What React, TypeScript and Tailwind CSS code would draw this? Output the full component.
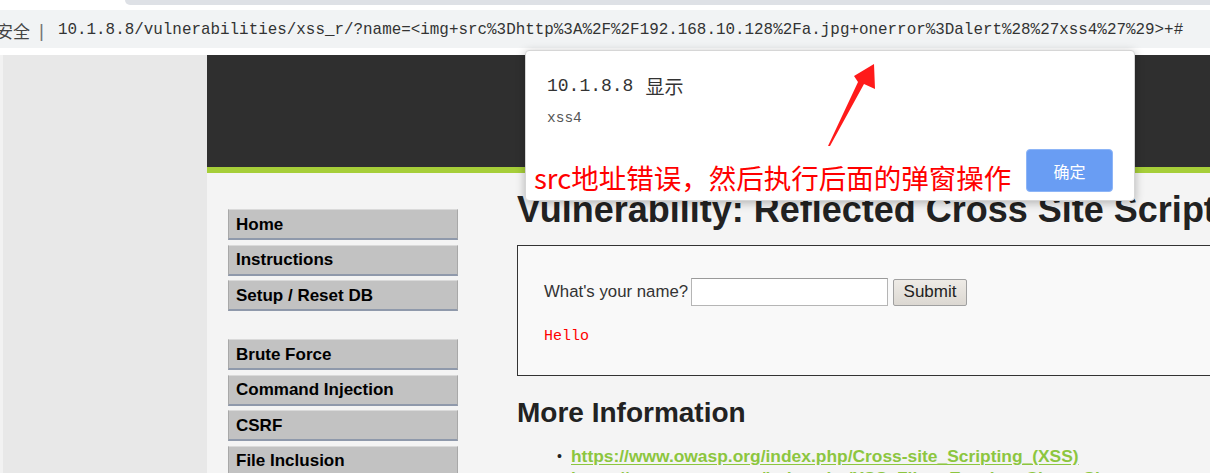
import React from "react";

const menuTop = ["Home", "Instructions", "Setup / Reset DB"];
const menuBottom = ["Brute Force", "Command Injection", "CSRF", "File Inclusion", "File Upload"];

function MenuItem({ label }: { label: string }) {
  return (
    <div className="h-[31px] w-[230px] shrink-0 bg-[#c2c2c2] border-t border-t-[#dadada] border-l border-l-[#a8a8a8] border-r border-r-[#a8a8a8] border-b-2 border-b-[#8f99ab] pl-[7px] flex items-center text-[17px] font-bold text-black leading-none">
      {label}
    </div>
  );
}

export default function App() {
  return (
    <div className="relative w-[1210px] h-[473px] overflow-hidden bg-white font-['Liberation_Sans',Arial,sans-serif]">
      {/* tab strip */}
      <div className="flex h-[5px]">
        <div className="w-[125px] bg-white" />
        <div className="flex-1 bg-[#dee1e6] rounded-bl-[8px]" />
      </div>
      <div className="h-[5px] bg-white" />
      {/* address bar */}
      <div className="h-[38px] bg-[#f1f3f4] flex items-center pt-[4px] whitespace-nowrap text-[#333] text-[15.9px] font-['Liberation_Mono','Noto_Sans_CJK_SC',monospace]">
        <span className="-ml-[4px] font-['Noto_Sans_CJK_SC',sans-serif] text-[17px] text-[#444]">安全</span>
        <span className="ml-[9px] text-[#777] text-[19px] font-['Liberation_Sans',sans-serif] font-light">|</span>
        <span className="ml-[14px]">10.1.8.8/vulnerabilities/xss_r/?name=&lt;img+src%3Dhttp%3A%2F%2F192.168.10.128%2Fa.jpg+onerror%3Dalert%28%27xss4%27%29&gt;+#</span>
      </div>
      <div className="h-[7px] bg-white" />

      {/* page */}
      <div className="flex h-[418px]">
        <div className="w-[207px] shrink-0 bg-[#e8e8e8] border-l-[3px] border-l-[#f2f2f2]" />
        <div className="flex-1 flex flex-col min-w-0">
          <div className="h-[112px] bg-[#2f2f2f] shrink-0" />
          <div className="h-[6px] bg-[#a6ce39] shrink-0" />
          <div className="flex-1 bg-[#f4f4f4] flex">
            {/* menu */}
            <div className="w-[310px] shrink-0 pl-[21px] pt-[36px] flex flex-col">
              <div className="flex flex-col gap-[4.6px]">
                {menuTop.map((m) => (
                  <MenuItem key={m} label={m} />
                ))}
              </div>
              <div className="flex flex-col gap-[4.6px] mt-[28px]">
                {menuBottom.map((m) => (
                  <MenuItem key={m} label={m} />
                ))}
              </div>
            </div>
            {/* content */}
            <div className="flex-1 min-w-0 flex flex-col">
              <h1 className="mt-[16px] text-[36px] leading-[42px] font-bold text-[#222] whitespace-nowrap">
                Vulnerability: Reflected Cross Site Scripting (XSS)
              </h1>
              <div className="mt-[14px] w-[760px] h-[131px] shrink-0 border border-[#333] bg-[#f9f9f9] pl-[26px] pt-[32px]">
                <div className="flex items-center h-[28px]">
                  <span className="text-[16.8px] text-[#333] whitespace-nowrap">What's your name?</span>
                  <div className="ml-[3px] w-[197px] h-[28px] bg-white border border-[#b5b5b5] border-t-[#9a9a9a]" />
                  <div className="ml-[5px] w-[74px] h-[27px] rounded-[2px] border border-[#a0a0a0] bg-gradient-to-b from-[#eeebe6] to-[#dcd8d2] flex items-center justify-center text-[17px] text-[#222]">
                    Submit
                  </div>
                </div>
                <div className="mt-[22px] text-[15px] leading-[18px] text-[#ff0000] font-['Liberation_Mono',monospace]">
                  Hello
                </div>
              </div>
              <h2 className="mt-[20px] text-[28px] leading-[34px] font-bold text-[#222] whitespace-nowrap">
                More Information
              </h2>
              <div className="mt-[15px] flex flex-col">
                <div className="flex items-center h-[22px] whitespace-nowrap">
                  <span className="ml-[40px] w-[14px] text-[14px] text-[#222]">•</span>
                  <span className="text-[17.4px] font-bold text-[#8cc63f] underline underline-offset-[2px]">
                    https://www.owasp.org/index.php/Cross-site_Scripting_(XSS)
                  </span>
                </div>
                <div className="flex items-center h-[22px] whitespace-nowrap">
                  <span className="ml-[40px] w-[14px] text-[14px] text-[#222]">•</span>
                  <span className="text-[17.4px] font-bold text-[#8cc63f] underline underline-offset-[2px]">
                    https://www.owasp.org/index.php/XSS_Filter_Evasion_Cheat_Sheet
                  </span>
                </div>
              </div>
            </div>
          </div>
        </div>
      </div>

      {/* alert dialog */}
      <div className="absolute left-[525px] top-[50px] w-[610px] h-[151px] bg-white rounded-[4px] border border-[#d6d6d6] shadow-[0_2px_10px_rgba(0,0,0,0.28)] px-[21px] pt-[24px] flex flex-col">
        <div className="h-[22px] flex items-center text-[18px] text-[#333] whitespace-nowrap font-['Liberation_Mono','Noto_Sans_CJK_SC',monospace]">
          <span>10.1.8.8</span>
          <span className="font-['Noto_Sans_CJK_SC',sans-serif] text-[19px] ml-[12px]">显示</span>
        </div>
        <div className="mt-[13px] h-[18px] flex items-center text-[14.5px] text-[#555] font-['Liberation_Mono',monospace]">
          xss4
        </div>
        <div className="mt-[21px] flex items-end justify-between">
          <span className="-ml-[13px] translate-y-[1px] text-[27.5px] leading-[32px] text-[#ff0000] whitespace-nowrap font-['Noto_Sans_CJK_SC',sans-serif]">
            src地址错误，然后执行后面的弹窗操作
          </span>
          <div className="w-[87px] h-[43px] rounded-[4px] bg-[#699df3] border border-[#8db5f7] flex items-center justify-center text-white text-[16px] font-['Noto_Sans_CJK_SC',sans-serif]">
            确定
          </div>
        </div>
      </div>

      {/* red arrow annotation */}
      <svg className="absolute left-0 top-0" width="1210" height="473" viewBox="0 0 1210 473">
        <polygon
          points="828,146 858,82 854,76 874,64 875,89 864,84 830,146"
          fill="#ff1a1a"
        />
      </svg>
    </div>
  );
}
